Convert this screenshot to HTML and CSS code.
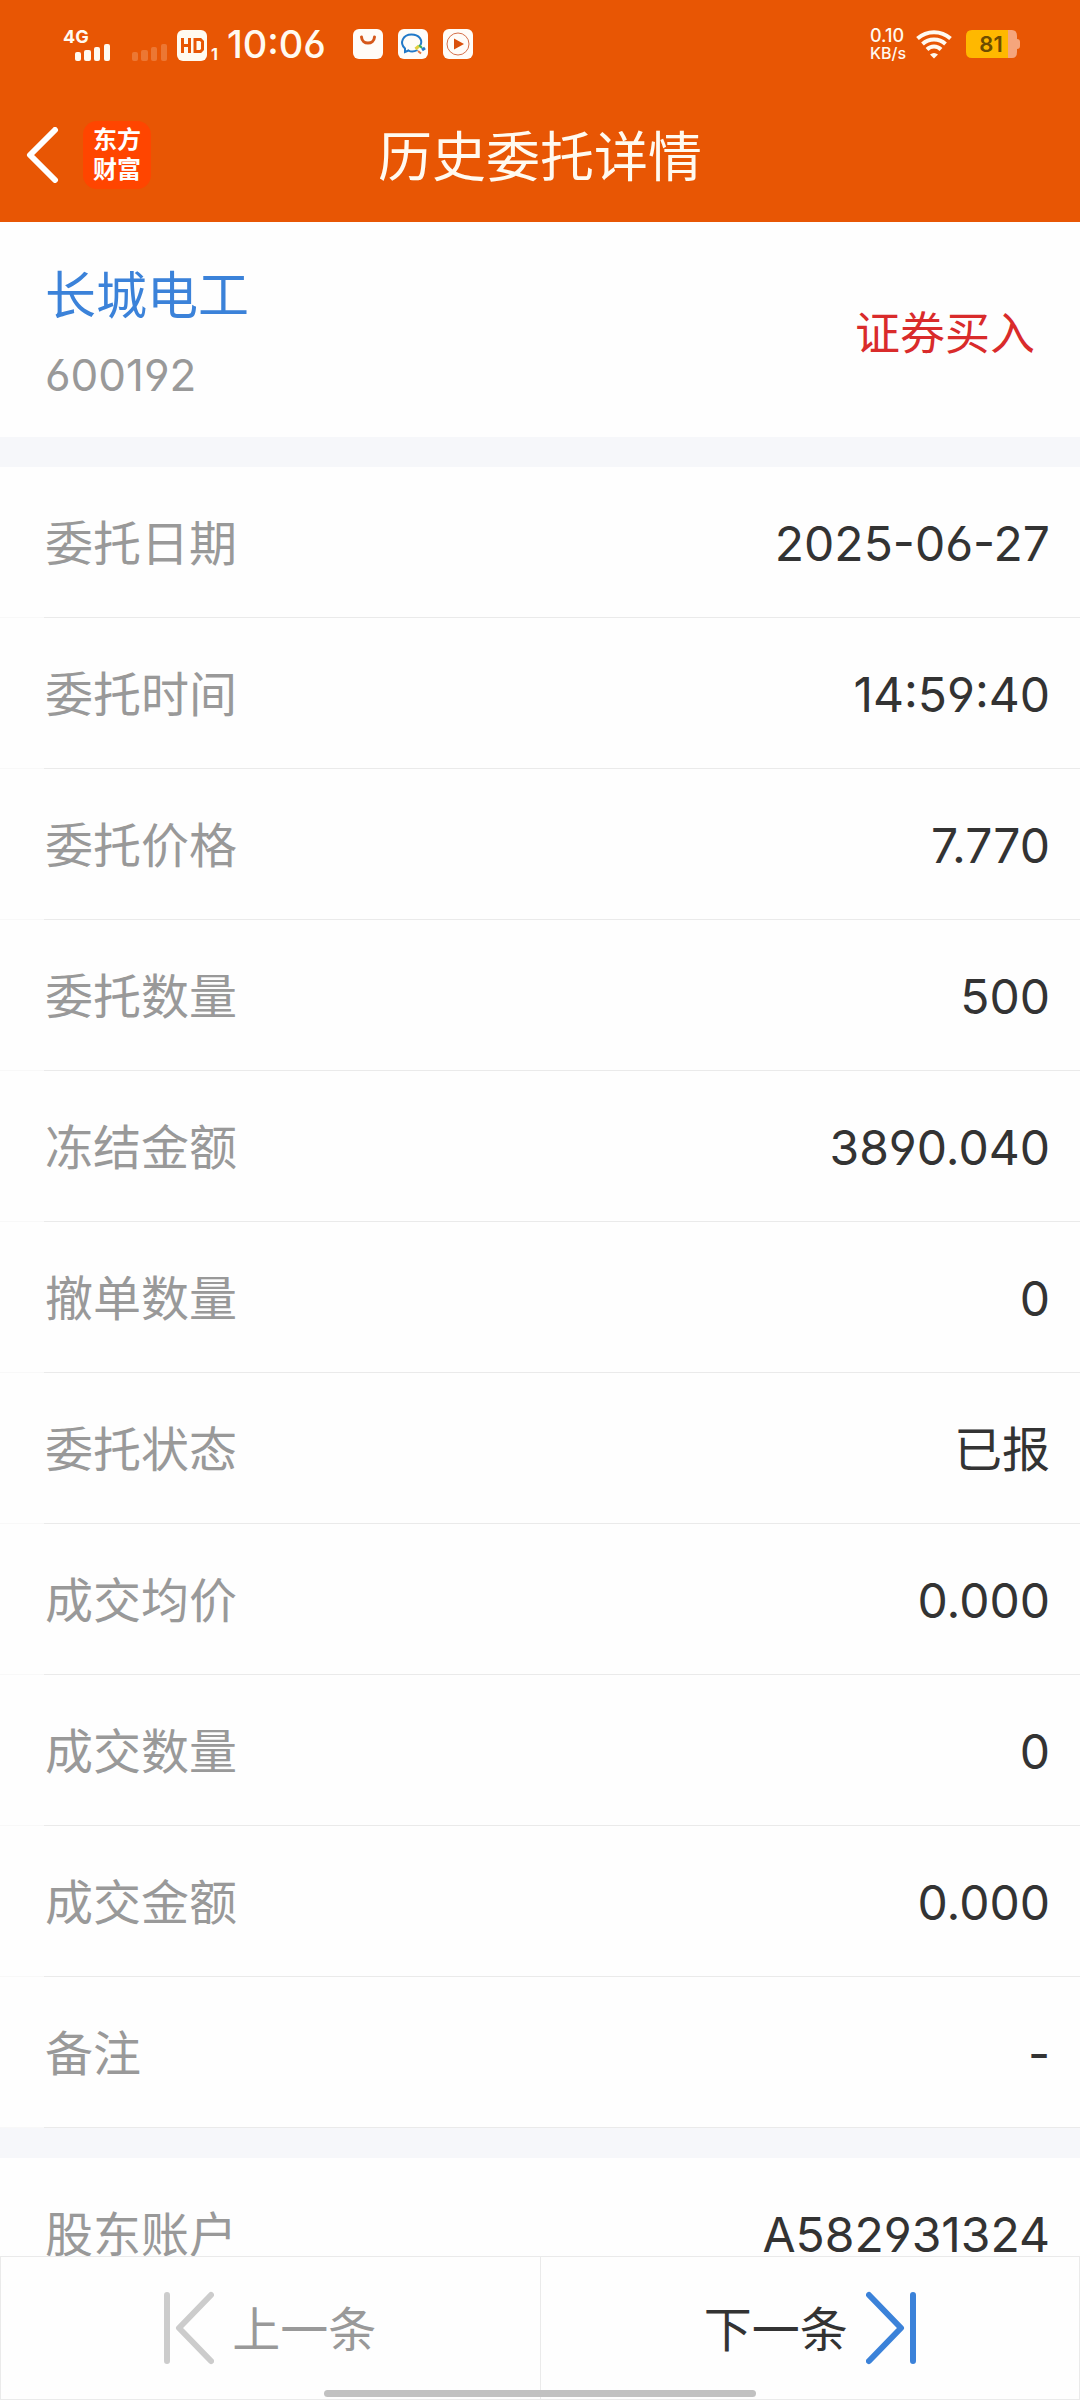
FILE: index.html
```html
<!DOCTYPE html>
<html lang="zh-CN">
<head>
<meta charset="utf-8">
<meta name="viewport" content="width=device-width">
<title>历史委托详情</title>
<link rel="stylesheet" href="styles.css">
</head>
<body>
<div class="app">
  <header class="top">
    <div class="status">
      <div class="status-left">
        <svg class="signals" width="158" height="40" viewBox="0 -2 158 40" fill="#fffaf0">
          <text class="net" x="0" y="17">4G</text>
          <rect x="12" y="26" width="6" height="9" rx="2"/><rect x="21" y="24" width="7" height="11" rx="2"/><rect x="31" y="21" width="6" height="14" rx="2"/><rect x="41" y="18" width="6" height="17" rx="2"/>
          <g opacity=".2"><rect x="69" y="26" width="6" height="9" rx="2"/><rect x="78" y="24" width="7" height="11" rx="2"/><rect x="88" y="21" width="6" height="14" rx="2"/><rect x="98" y="18" width="6" height="17" rx="2"/></g>
          <rect x="114" y="4" width="30" height="31" rx="6"/>
          <g fill="none" stroke="#e85604" stroke-width="3"><path d="M119.500 12V27M126.500 12V27M119.500 19.500H126.500M132 13.500H137.500L139.500 15.500V23.500L137.500 25.500H132Z"/></g>
          <text class="sim" x="148" y="34">1</text>
        </svg>
        <time class="clock">10:06</time>
        <svg class="notice" width="120" height="32" viewBox="0 0 120 32">
          <rect y="1" width="30" height="30" rx="6" fill="#fffcf8"/>
          <path d="M8.500 9C9 17 21 17 21.500 9" fill="none" stroke="#d5581b" stroke-width="3" stroke-linecap="round"/>
          <rect x="45" y="1" width="30" height="30" rx="6" fill="#fffcf8"/>
          <path d="M64.500 22C60 24.500 57 23.500 55.500 22.500L52 24V20.500C46 15 50 6.500 58.500 6.500C66 6.500 70 12 67.500 17" fill="none" stroke="#2279c8" stroke-width="2"/>
          <path d="M62.500 21L66 18" stroke="#e2cf3c" stroke-width="3"/><path d="M66 17L69 20" stroke="#35a855" stroke-width="2"/><path d="M69 22L72 20" stroke="#2279c8" stroke-width="3"/><path d="M65 23L68 25.500" stroke="#e07947" stroke-width="2"/>
          <rect x="90" y="1" width="30" height="30" rx="6" fill="#fffcf8"/>
          <circle cx="105" cy="16" r="11" fill="none" stroke="#d5704a"/>
          <path d="M101 10.500L111 16L101 21.500Z" fill="#d9500c"/>
        </svg>
      </div>
      <div class="status-right">
        <div class="speed"><span>0.10</span><span class="unit">KB/s</span></div>
        <svg class="wifi" width="36" height="30" viewBox="0 0 36 30" fill="none" stroke="#fffaf0" stroke-width="4">
          <path d="M1.500 9.500C11 1 25 1 34.500 9.500"/><path d="M6.500 15C13 9 23 9 29.500 15"/><path d="M11 20.500C15 16.500 21 16.500 25 20.500"/><path d="M18 29.500L14 25.500Q18 22.500 22 25.500Z" fill="#fffaf0" stroke="none"/>
        </svg>
        <svg class="battery" width="54" height="28" viewBox="0 0 54 28">
          <path d="M42 0H46Q51 0 51 6V9Q54 9 54 12V16Q54 19 51 19V22Q51 28 46 28H42Z" fill="#f5a57c"/>
          <path d="M6 0H42V28H6Q0 28 0 22V6Q0 0 6 0Z" fill="#ffb800"/>
          <text class="level" x="25" y="22" text-anchor="middle">81</text>
        </svg>
      </div>
    </div>
    <div class="bar">
      <div class="bar-left">
        <button class="back" type="button" aria-label="返回">
          <svg width="33" height="56" viewBox="0 0 33 56" fill="none" stroke="#fff" stroke-width="6" stroke-linecap="round" stroke-linejoin="round"><path d="M29 3L4 28L29 53"/></svg>
        </button>
        <div class="logo"><span>东方</span><span>财富</span></div>
      </div>
      <h1 class="title">历史委托详情</h1>
    </div>
  </header>

  <main class="content">
    <section class="stock">
      <div>
        <a class="stock-name" href="#stock">长城电工</a>
        <div class="stock-code">600192</div>
      </div>
      <div class="side">证券买入</div>
    </section>
    <dl class="list">
      <div class="row"><dt>委托日期</dt><dd>2025-06-27</dd></div>
      <div class="row"><dt>委托时间</dt><dd>14:59:40</dd></div>
      <div class="row"><dt>委托价格</dt><dd>7.770</dd></div>
      <div class="row"><dt>委托数量</dt><dd>500</dd></div>
      <div class="row"><dt>冻结金额</dt><dd>3890.040</dd></div>
      <div class="row"><dt>撤单数量</dt><dd>0</dd></div>
      <div class="row"><dt>委托状态</dt><dd>已报</dd></div>
      <div class="row"><dt>成交均价</dt><dd>0.000</dd></div>
      <div class="row"><dt>成交数量</dt><dd>0</dd></div>
      <div class="row"><dt>成交金额</dt><dd>0.000</dd></div>
      <div class="row"><dt>备注</dt><dd>-</dd></div>
    </dl>
    <dl class="list">
      <div class="row"><dt>股东账户</dt><dd>A582931324</dd></div>
    </dl>
  </main>

  <nav class="pager">
    <button class="page prev" type="button">
      <svg width="50" height="74" viewBox="0 0 50 74" fill="none" stroke="#ccc" stroke-width="6" stroke-linecap="round" stroke-linejoin="round"><path d="M3 4V70M47 4L15 37L47 70"/></svg>
      <span>上一条</span>
    </button>
    <button class="page next" type="button">
      <span>下一条</span>
      <svg width="50" height="74" viewBox="0 0 50 74" fill="none" stroke="#3b82d9" stroke-width="6" stroke-linecap="round" stroke-linejoin="round"><path d="M47 4V70M3 4L35 37L3 70"/></svg>
    </button>
    <div class="home"></div>
  </nav>
</div>
</body>
</html>
```
FILE: styles.css
```css
* { box-sizing: border-box; }

body {
  margin: 0;
  background: #fefefe;
  color: #333;
  font-family: Inter, "Noto Sans CJK SC", sans-serif;
  font-feature-settings: "cv03", "cv04";
}

button {
  margin: 0;
  padding: 0;
  border: 0;
  background: none;
  color: inherit;
  font: inherit;
  font-feature-settings: inherit;
}

svg { display: block; }

.app {
  display: flex;
  flex-direction: column;
  height: 100vh;
}

.top {
  flex: none;
  background: #e85604;
  color: #fffaf0;
}

.status {
  display: flex;
  justify-content: space-between;
  align-items: center;
  height: 88px;
  padding: 0 60px 0 63px;
}

.status-left,
.status-right {
  display: flex;
  align-items: center;
}

.net { font-size: 18px; font-weight: 700; }
.sim { font-size: 16px; font-weight: 700; }

.clock {
  margin: 0 27px 0 6px;
  font-size: 38px;
  line-height: 44px;
  font-weight: 500;
}

.speed {
  display: flex;
  flex-direction: column;
  font-size: 18px;
  line-height: 18px;
  font-weight: 500;
}

.unit {
  font-size: 16px;
  line-height: 16px;
}

.wifi { margin: 0 14px 0 10px; }
.level { fill: #6e4c00; font-size: 22px; font-weight: 600; }

.bar {
  display: grid;
  grid-template-columns: 1fr auto 1fr;
  align-items: center;
  height: 134px;
  padding: 0 26px;
}

.bar-left {
  display: flex;
  align-items: center;
  gap: 24px;
}

.logo {
  display: flex;
  flex-direction: column;
  align-items: center;
  justify-content: center;
  width: 68px;
  height: 68px;
  border-radius: 14px;
  background: #ff4500;
  color: #fff;
  font-size: 24px;
  line-height: 30px;
  font-weight: 700;
}

.title {
  margin: 0;
  padding-top: 6px;
  font-size: 54px;
  line-height: 64px;
  font-weight: 400;
}

.content {
  flex: 1;
  min-height: 0;
  overflow-y: auto;
  scrollbar-width: none;
  background: #f6f7fa;
}

.stock {
  display: flex;
  justify-content: space-between;
  align-items: center;
  padding: 36px 45px 28px;
  background: #fefefe;
}

.stock-name {
  display: block;
  color: #3b82d9;
  font-size: 51px;
  line-height: 76px;
  text-decoration: none;
}

.stock-code {
  padding-top: 7px;
  color: #999;
  font-size: 44px;
  line-height: 68px;
}

.side {
  color: #d92b2b;
  font-size: 45px;
  line-height: 68px;
}

.list {
  margin: 30px 0 0;
  background: #fefefe;
}

.row {
  display: flex;
  justify-content: space-between;
  align-items: center;
  height: 151px;
  padding: 4px 30px 0 45px;
  border-bottom: 1px solid;
  border-image: linear-gradient(to right, #f8f8f8 45px, #eaeaea 45px) 1;
  font-size: 48px;
  line-height: 72px;
}

.row dt { color: #999; }
.row dd { margin: 0; }

.pager {
  position: relative;
  display: flex;
  flex: none;
  height: 144px;
  border: 1px solid #eaeaea;
  background: #fefefe;
}

.page {
  display: flex;
  flex: 1;
  align-items: center;
  justify-content: center;
  gap: 18px;
  font-size: 48px;
  line-height: 72px;
}

.page span { padding-top: 4px; }

.prev {
  border-right: 1px solid #eaeaea;
  color: #999;
}

.home {
  position: absolute;
  bottom: 2px;
  left: 30%;
  width: 40%;
  height: 7px;
  border-radius: 4px;
  background: #c1c1c1;
}
```
